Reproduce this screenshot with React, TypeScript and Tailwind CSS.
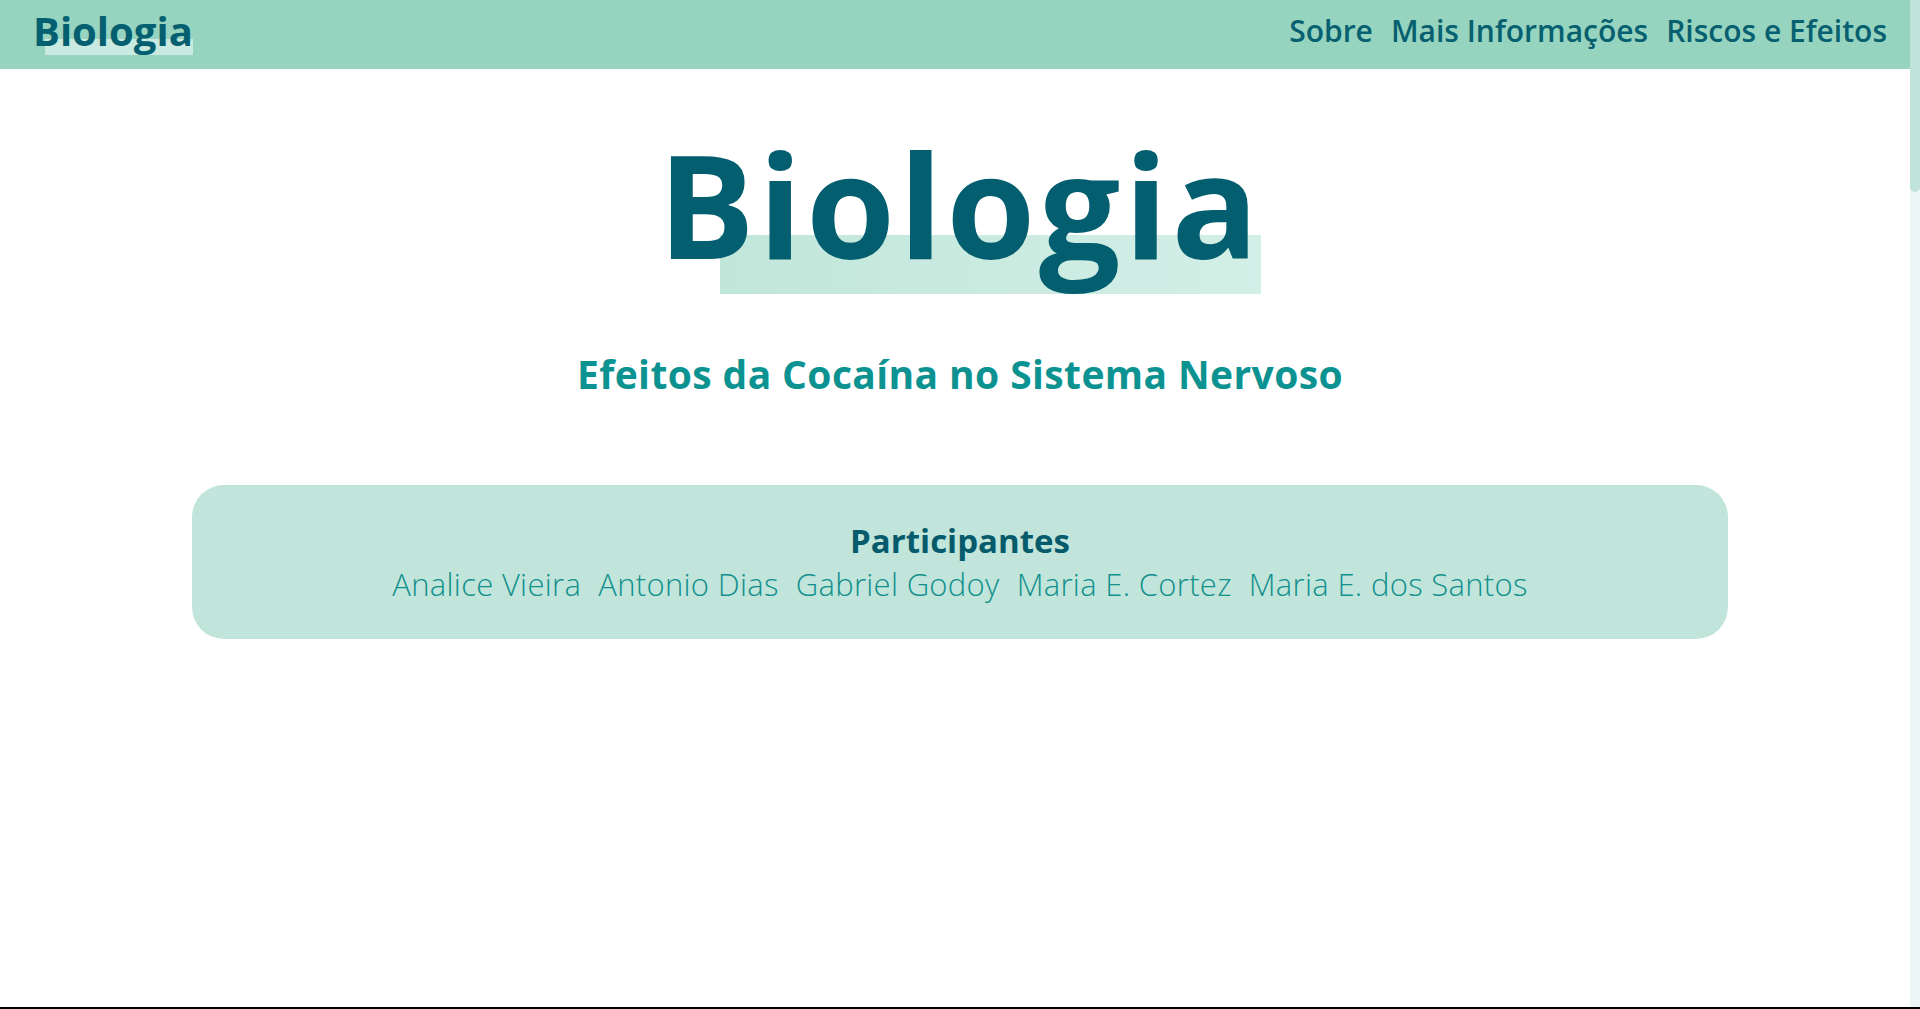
import React from 'react';

const names = ['Analice Vieira', 'Antonio Dias', 'Gabriel Godoy', 'Maria E. Cortez', 'Maria E. dos Santos'];

const Navbar: React.FC = () => {
  return (
    <header className="h-[69px] shrink-0 bg-[#96d4bf] flex items-center justify-between pl-[33px] pr-[23px]">
      <a href="#" className="relative isolate -mt-2 text-[40px] leading-none font-bold text-[#045f70]">
        Biologia
        <span className="absolute -z-10 left-[12px] right-0 top-[28px] h-[16px] bg-[#c9eae0]" />
      </a>
      <nav className="-mt-2 flex items-center gap-[18px] text-[30px] leading-none font-semibold text-[#07606f]">
        <a href="#sobre">Sobre</a>
        <a href="#info">Mais Informações</a>
        <a href="#riscos">Riscos e Efeitos</a>
      </nav>
    </header>
  );
};

const Hero: React.FC = () => {
  return (
    <section className="flex flex-col items-center pt-[62px] pl-[10px]">
      <h1 className="relative isolate text-[144px] leading-none font-bold tracking-[0.025em] text-[#035f70]">
        Biologia
        <span className="absolute -z-10 left-[62px] right-[1px] top-[104px] h-[59px] bg-linear-to-r from-[#c1e6da] to-[#d3efe7]" />
      </h1>
      <h2 className="mt-[79px] text-[39px] leading-none font-bold tracking-[0.01em] text-[#0c9391]">
        Efeitos da Cocaína no Sistema Nervoso
      </h2>
      <div className="mt-[92px] w-[1536px] h-[154px] rounded-[32px] bg-[#c1e5da] flex flex-col items-center justify-center gap-[12px]">
        <h3 className="text-[33px] leading-none font-bold text-[#055b6c]">Participantes</h3>
        <ul className="flex gap-[17px] text-[31px] leading-none font-light tracking-[0.01em] text-[#11908d]">
          {names.map((n) => (
            <li key={n}>{n}</li>
          ))}
        </ul>
      </div>
    </section>
  );
};

const Scrollbar: React.FC = () => {
  return (
    <div className="w-[10px] shrink-0 bg-[#edf6f7]">
      <div className="h-[192px] rounded-b-full bg-[#bfe3d9]" />
    </div>
  );
};

export default function App() {
  return (
    <div className="h-screen flex flex-col bg-white font-['Open_Sans',sans-serif]">
      <div className="flex-1 flex overflow-hidden">
        <div className="flex-1 min-w-0">
          <Navbar />
          <main>
            <Hero />
          </main>
        </div>
        <Scrollbar />
      </div>
      <div className="h-[2px] shrink-0 bg-black" />
    </div>
  );
}
